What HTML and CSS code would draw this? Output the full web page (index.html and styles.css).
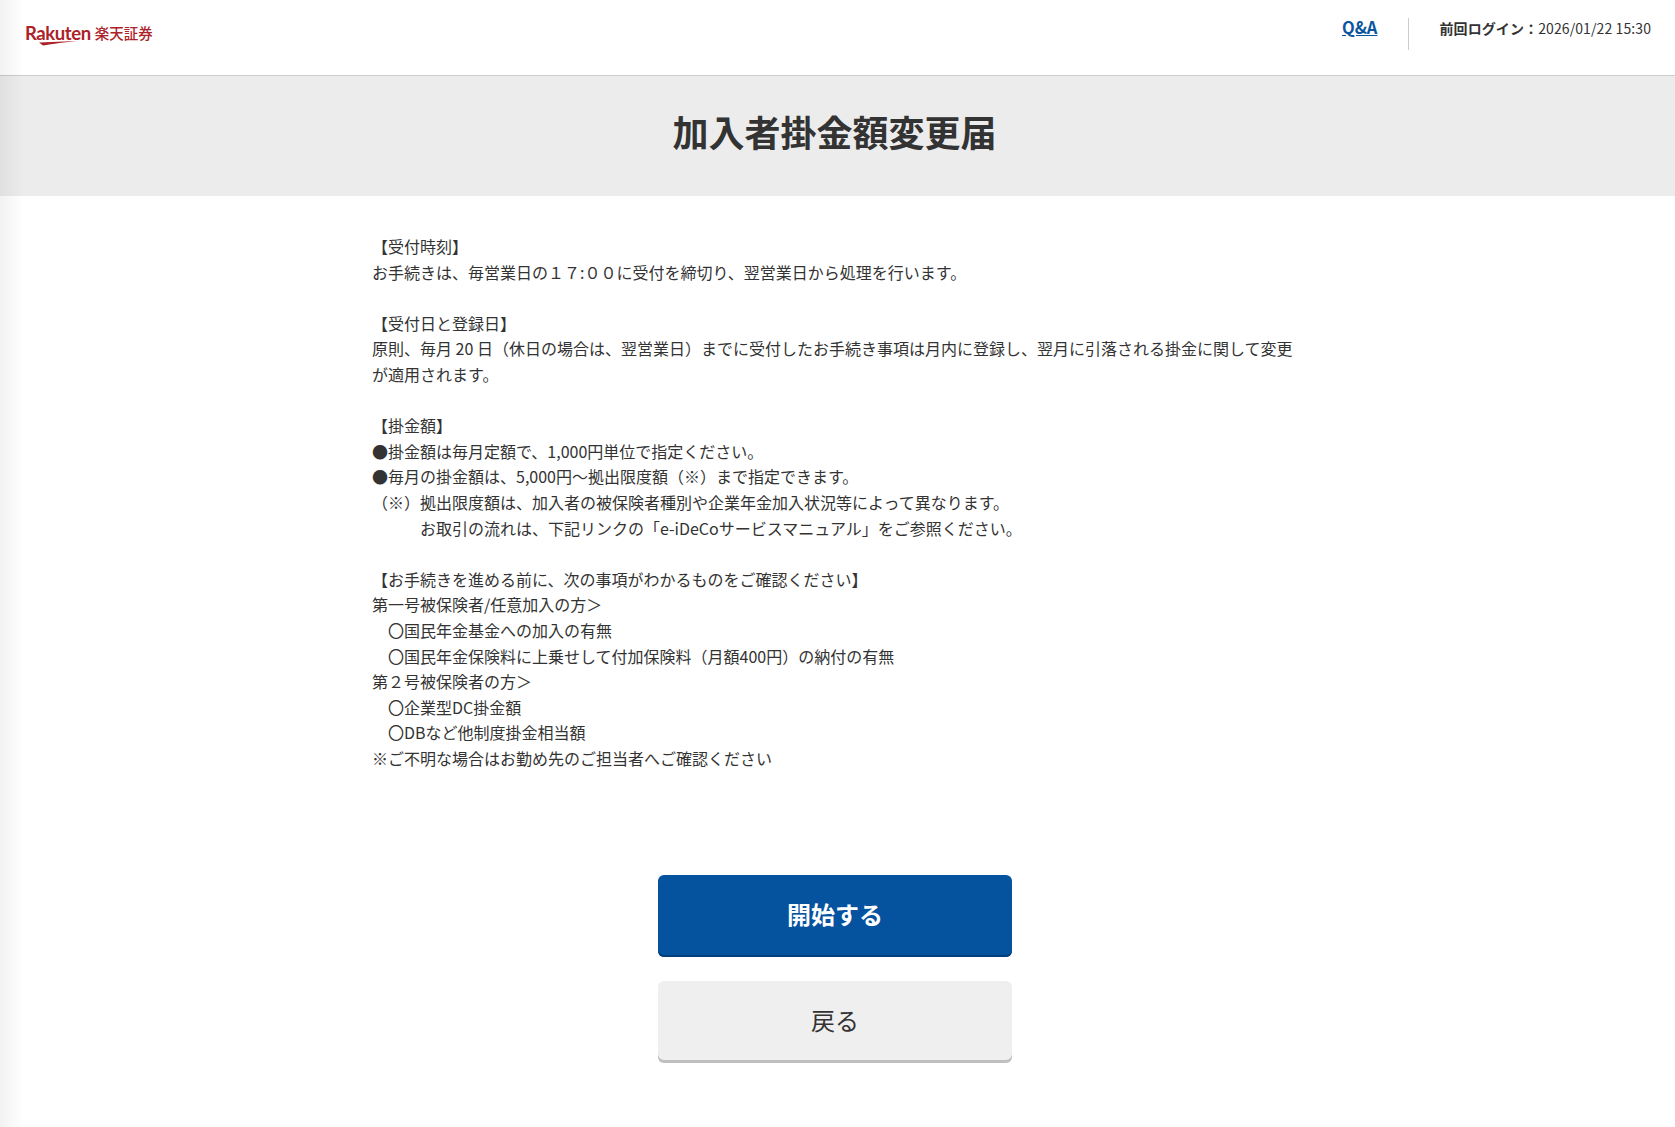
FILE: index.html
```html
<!DOCTYPE html>
<html lang="ja">
<head>
<meta charset="utf-8">
<title>加入者掛金額変更届</title>
<link rel="stylesheet" href="styles.css">
</head>
<body>
<header class="site-header">
  <div class="logo">
    <span class="logo-mark">Rakuten<svg class="logo-swoosh" viewBox="0 0 40 5" aria-hidden="true"><path d="M1 1.5 L39 0 C28 1.5 14 2.6 5 4.6 Z"/></svg></span>
    <span class="logo-jp">楽天証券</span>
  </div>
  <div class="header-right">
    <a class="qa" href="#">Q&amp;A</a>
    <div class="last-login"><b>前回ログイン：</b>2026/01/22 15:30</div>
  </div>
</header>
<section class="title-band"><h1>加入者掛金額変更届</h1></section>
<main class="content">
<p class="notice">【受付時刻】
お手続きは、毎営業日の１７:００に受付を締切り、翌営業日から処理を行います。

【受付日と登録日】
原則、毎月 20 日（休日の場合は、翌営業日）までに受付したお手続き事項は月内に登録し、翌月に引落される掛金に関して変更
が適用されます。

【掛金額】
●掛金額は毎月定額で、1,000円単位で指定ください。
●毎月の掛金額は、5,000円～拠出限度額（※）まで指定できます。
（※）拠出限度額は、加入者の被保険者種別や企業年金加入状況等によって異なります。
　　　お取引の流れは、下記リンクの「e-iDeCoサービスマニュアル」をご参照ください。

【お手続きを進める前に、次の事項がわかるものをご確認ください】
第一号被保険者/任意加入の方＞
　〇国民年金基金への加入の有無
　〇国民年金保険料に上乗せして付加保険料（月額400円）の納付の有無
第２号被保険者の方＞
　〇企業型DC掛金額
　〇DBなど他制度掛金相当額
※ご不明な場合はお勤め先のご担当者へご確認ください</p>
<div class="actions">
  <button class="btn btn-primary" type="button">開始する</button>
  <button class="btn btn-secondary" type="button">戻る</button>
</div>
</main>
</body>
</html>
```
FILE: styles.css
```css
* { box-sizing: border-box; }
html, body { margin: 0; padding: 0; }
body {
  position: relative;
  height: 1127px;
  overflow: hidden;
  background: #fff;
  color: #333;
  font-family: "Noto Sans CJK JP", "Noto Sans", sans-serif;
}
body::before {
  content: "";
  position: absolute;
  top: 0;
  bottom: 0;
  left: 0;
  width: 24px;
  background: linear-gradient(to right, rgba(0,0,0,.05), rgba(0,0,0,0));
  pointer-events: none;
}
.site-header {
  height: 76px;
  border-bottom: 1px solid #ccc;
  display: flex;
  justify-content: space-between;
  align-items: center;
  padding: 0 24px 0 25px;
}
.logo { display: flex; align-items: center; gap: 4px; color: #ab2229; margin-top: -10px; }
.logo-mark {
  position: relative;
  font-family: "Lato", sans-serif;
  font-size: 18.5px;
  line-height: 24px;
  font-weight: 700;
  letter-spacing: -.4px;
}
.logo-swoosh {
  position: absolute;
  left: 13px;
  top: 20px;
  width: 40px;
  height: 5px;
  fill: #ab2229;
}
.logo-jp { font-size: 14.5px; line-height: 24px; font-weight: 500; }
.header-right { display: flex; align-items: center; margin-top: -7px; }
.qa {
  color: #0a55a0;
  font-size: 16.5px;
  font-weight: 700;
  padding-right: 31px;
  border-right: 1px solid #ccc;
  height: 32px;
  line-height: 18px;
}
.last-login { padding-left: 30px; font-size: 14px; line-height: 20px; letter-spacing: .1px; margin-top: -13px; }
.last-login b { font-weight: 700; }
.title-band {
  height: 120px;
  padding-right: 6px;
  background: #ececec;
  display: flex;
  align-items: center;
  justify-content: center;
}
.title-band h1 {
  margin: -10px 0 0;
  font-size: 36px;
  line-height: 1.4;
  font-weight: 700;
  color: #333;
}
.content { display: flex; flex-direction: column; align-items: center; padding: 38px 5px 0 0; }
.notice {
  width: 926px;
  margin: 0;
  font-size: 16px;
  line-height: 25.6px;
  white-space: pre-wrap;
  color: #333;
}
.actions { display: flex; flex-direction: column; gap: 24px; margin-top: 104px; }
.btn {
  width: 354px;
  height: 82px;
  border: 0;
  border-radius: 6px;
  padding: 0 0 6px;
  font-family: inherit;
  font-size: 24px;
  cursor: pointer;
}
.btn-primary { background: #05529f; color: #fff; font-weight: 700; box-shadow: inset 0 -2px 0 #033f7c; }
.btn-secondary { background: #efefef; color: #333; font-weight: 400; box-shadow: inset 0 -3px 0 #bfbfbf; }
```
